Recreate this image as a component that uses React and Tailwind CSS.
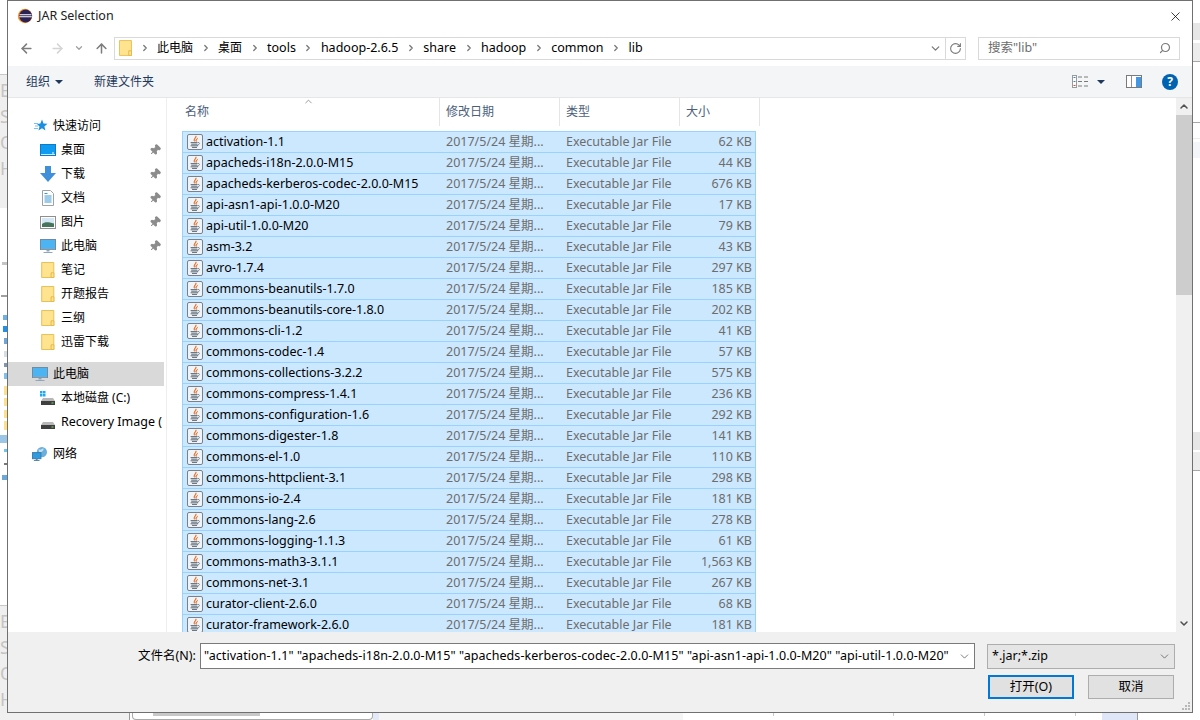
import React from 'react';
import { ArrowLeft, ArrowRight, ArrowUp, ChevronDown, ChevronRight, ChevronUp, RotateCw, Search, X, Pin } from 'lucide-react';

const files = [
  ['activation-1.1', '62 KB'],
  ['apacheds-i18n-2.0.0-M15', '44 KB'],
  ['apacheds-kerberos-codec-2.0.0-M15', '676 KB'],
  ['api-asn1-api-1.0.0-M20', '17 KB'],
  ['api-util-1.0.0-M20', '79 KB'],
  ['asm-3.2', '43 KB'],
  ['avro-1.7.4', '297 KB'],
  ['commons-beanutils-1.7.0', '185 KB'],
  ['commons-beanutils-core-1.8.0', '202 KB'],
  ['commons-cli-1.2', '41 KB'],
  ['commons-codec-1.4', '57 KB'],
  ['commons-collections-3.2.2', '575 KB'],
  ['commons-compress-1.4.1', '236 KB'],
  ['commons-configuration-1.6', '292 KB'],
  ['commons-digester-1.8', '141 KB'],
  ['commons-el-1.0', '110 KB'],
  ['commons-httpclient-3.1', '298 KB'],
  ['commons-io-2.4', '181 KB'],
  ['commons-lang-2.6', '278 KB'],
  ['commons-logging-1.1.3', '61 KB'],
  ['commons-math3-3.1.1', '1,563 KB'],
  ['commons-net-3.1', '267 KB'],
  ['curator-client-2.6.0', '68 KB'],
  ['curator-framework-2.6.0', '181 KB'],
];

const crumbs = ['此电脑', '桌面', 'tools', 'hadoop-2.6.5', 'share', 'hadoop', 'common', 'lib'];

// bits of the window behind the dialog that show in the left edge
const leftMarks = [
  [262, 'w-[5px]', 'bg-[#c4c4c4]', 3], [295, 'w-[6px]', 'bg-[#a0a0a0]', 2], [315, 'w-[4px]', 'bg-[#6cb2ea]', 5],
  [326, 'w-[4px]', 'bg-[#1e90f0]', 6], [338, 'w-[3px]', 'bg-[#6da6de]', 6], [351, 'w-[3px]', 'bg-[#d5dde5]', 6],
  [363, 'w-[3px]', 'bg-[#7c97ae]', 4], [373, 'w-[3px]', 'bg-[#7fc0ee]', 6], [386, 'w-[3px]', 'bg-[#ffe08a]', 9],
  [398, 'w-[3px]', 'bg-[#ffe08a]', 8], [410, 'w-[3px]', 'bg-[#ffe08a]', 8], [421, 'w-[3px]', 'bg-[#ffe08a]', 9],
  [435, 'w-[7px]', 'bg-[#9cc6e8]', 8], [449, 'w-[3px]', 'bg-[#6cc6ee]', 3], [463, 'w-[3px]', 'bg-[#777777]', 2],
  [475, 'w-[5px]', 'bg-[#6aa9dc]', 5],
];

function EclipseIcon() {
  return (
    <svg width="16" height="16" viewBox="0 0 16 16">
      <circle cx="8" cy="8" r="7.2" fill="#f7941e" />
      <circle cx="8.6" cy="8" r="6.5" fill="#2c2255" />
      <path d="M2.5 6.3h12v1h-12zM2.2 8.3h12.6v1H2.2z" fill="#fff" />
    </svg>
  );
}

function Folder({ size = 16 }) {
  return (
    <svg width={size * 0.85} height={size} viewBox="0 0 14 17">
      <path d="M.5.5h12.9v16H.5z" fill="#ffe38f" stroke="#e8bd4f" />
      <path d="M10.5 11.5h3v5h-3z" fill="#ffe38f" stroke="#e3b749" />
    </svg>
  );
}

function JarIcon() {
  return (
    <svg width="16" height="16" viewBox="0 0 16 16" className="shrink-0">
      <rect x=".5" y=".5" width="15" height="15" rx="1.5" fill="#f1f4f7" stroke="#76838f" />
      <path d="M9 1.8c1.2 2-2.6 3-1.2 5.7C5.4 5.8 8.6 4 9 1.8zM10.6 4.2c-.1 1.2-1.9 1.6-1.2 3.3-1.5-1.2.2-2.6 1.2-3.3z" fill="#e0651b" stroke="#e0651b" strokeWidth=".5" />
      <path d="M3.6 8.6h6.8M4.2 10.2h6M3.6 11.8h7.4M5 13.4h5" stroke="#5d6a76" strokeWidth="1" fill="none" />
      <path d="M10.6 8.4c2.6-.3 2.4 2.4-.5 2.8" stroke="#5d6a76" strokeWidth=".8" fill="none" />
    </svg>
  );
}

function Monitor({ size = 16 }) {
  return (
    <svg width={size} height={size} viewBox="0 0 16 16">
      <rect x=".5" y="1.5" width="15" height="10" fill="#4cb4f2" stroke="#6d8ba3" />
      <path d="M1 10.5h14v1H1z" fill="#8fa6b8" />
      <path d="M6.5 12h3v1.5h-3z" fill="#8fa6b8" />
      <path d="M3.5 14h9v1h-9z" fill="#8fa6b8" />
    </svg>
  );
}

function Desktop() {
  return (
    <svg width="16" height="14" viewBox="0 0 16 14">
      <rect x=".5" y="1.5" width="15" height="11" fill="#0f9bf0" stroke="#0a7ccb" />
      <path d="M1 11h14v1H1z" fill="#cfeaff" />
      <path d="M12 9.5h2v1h-2z" fill="#fff" />
    </svg>
  );
}

function Download() {
  return (
    <svg width="16" height="16" viewBox="0 0 16 16">
      <path d="M5 0h6v7h5l-8 9-8-9h5z" fill="#3f8fdb" />
    </svg>
  );
}

function Doc() {
  return (
    <svg width="16" height="16" viewBox="0 0 16 16">
      <path d="M2.5.5h8l3 3v12h-11z" fill="#fff" stroke="#9aa3ab" />
      <path d="M4.5 3.5h3M4.5 6h7M4.5 8h7M4.5 10h7M4.5 12h7" stroke="#3b97d3" />
    </svg>
  );
}

function Picture() {
  return (
    <svg width="16" height="13" viewBox="0 0 16 13">
      <rect x=".5" y=".5" width="15" height="12" fill="#fff" stroke="#8f8f8f" />
      <rect x="2" y="2" width="12" height="9" fill="#d5e7f5" />
      <path d="M2 8c3-2.5 6-2 12-.5V11H2z" fill="#47745b" />
    </svg>
  );
}

function Drive({ win }) {
  return (
    <svg width="16" height="16" viewBox="0 0 16 16">
      {win && <path d="M0 1h2.5v2.5H0zM3 1h2.5v2.5H3zM0 4h2.5v2.5H0zM3 4h2.5v2.5H3z" fill="#1eaaf1" />}
      <path d="M3 8h10l2 3H1z" fill="#b8b8b8" />
      <rect x="1" y="11" width="14" height="4" fill="#3f3f3f" />
      <path d="M11.5 12.5h2v1h-2z" fill="#6fe06f" />
    </svg>
  );
}

function Network() {
  return (
    <svg width="17" height="16" viewBox="0 0 17 16">
      <circle cx="10.5" cy="6" r="5.5" fill="#6aaedc" />
      <path d="M7 3c2 1 3 0 5-1 1 2-1 3-2 4-2 1-3 0-3-3z" fill="#c3e1f4" />
      <rect x=".5" y="6.5" width="9" height="6.5" fill="#2f9be0" stroke="#3a7cab" />
      <path d="M4 13h2v1.5H4zM2 14.5h6v1H2z" fill="#5a89ab" />
    </svg>
  );
}

function QuickStar() {
  return (
    <svg width="15" height="14" viewBox="0 0 15 14">
      <path d="M9 .5l1.5 4 4 .3-3.1 2.6 1 4.1L9 9.3l-3.5 2.2 1-4.1L4 5l3.4-.4z" fill="#1d8fe1" />
      <path d="M1 4.5h4M2 7h3M1 9.5h4" stroke="#7cc0ee" />
    </svg>
  );
}

function NavItem({ icon, label, pinned, sub = true, selected, textClass = 'text-[12px]', className = '' }) {
  return (
    <div className={`flex items-center h-[24px] shrink-0 whitespace-nowrap overflow-hidden ${selected ? 'bg-[#d9d9d9]' : ''} ${className}`}>
      <div className={`flex justify-center shrink-0 ${sub ? 'w-[16px] ml-[32px] mr-[5px]' : 'w-[16px] ml-[24px] mr-[5px]'}`}>{icon}</div>
      <span className={`flex-1 text-black ${textClass}`}>{label}</span>
      {pinned && <Pin size={12} className="mr-[3px] shrink-0 rotate-45 text-[#8c8c8c] fill-[#8c8c8c]" />}
    </div>
  );
}

function FileRow({ name, size }) {
  return (
    <div className="flex items-center h-[21px] w-[574px] shrink-0 bg-[#cce8ff] border border-b-0 border-[#99d1ff] whitespace-nowrap text-[12.5px]">
      <div className="flex items-center w-[256px] pl-[4px] gap-[3px]">
        <JarIcon />
        <span className="text-black">{name}</span>
      </div>
      <span className="w-[120px] pl-[7px] text-[#6d6d6d]">2017/5/24 星期...</span>
      <span className="w-[120px] pl-[7px] text-[#6d6d6d]">Executable Jar File</span>
      <span className="flex-1 pr-[3px] text-right text-[#6d6d6d]">{size}</span>
    </div>
  );
}

function HeaderCell({ label, className = '' }) {
  return <div className={`flex items-center h-[28px] border-r border-[#e5e5e5] text-[12px] text-[#4c607a] ${className}`}>{label}</div>;
}

function LeftStrip() {
  return (
    <div className="relative w-[7px] h-[713px] shrink-0 overflow-hidden bg-white text-[18px] leading-none text-[#c4c4c4]">
      <div className="h-[74px]" />
      <div className="h-[134px] bg-[#efefef] border-t border-[#c8c8c8] flex flex-col gap-[8px] pt-[6px]">
        <span>E</span><span>S</span><span>O</span><span>H</span>
      </div>
      {leftMarks.map(([top, w, bg, h]) => (
        <div key={top} className={`absolute right-0 ${w} ${bg}`} style={{ top, height: h }} />
      ))}
      <div className="absolute left-0 top-[605px] w-[7px] h-[108px] bg-[#efefef] border-t border-[#c8c8c8] flex flex-col gap-[8px] pt-[6px]">
        <span>E</span><span>S</span><span>O</span><span>H</span>
      </div>
    </div>
  );
}

function RightStrip() {
  return (
    <div className="w-[7px] h-[713px] shrink-0 flex flex-col bg-white">
      <div className="h-[23px]" />
      <div className="h-[17px] bg-[#e6e6e6]" />
      <div className="h-[3px]" />
      <div className="h-[19px] bg-[#ececec] border-b border-[#a8a8a8]" />
      <div className="h-[61px] border-b border-[#a8a8a8]" />
      <div className="h-[16px] border-b border-[#ededed]" />
      <div className="h-[3px]" />
      <div className="h-[16px] bg-[#f3f5f9]" />
      <div className="h-[274px]" />
      <div className="h-[18px] bg-[#e6e6e6]" />
      <div className="h-[2px]" />
      <div className="h-[19px] bg-[#ececec] border-b border-[#a8a8a8]" />
    </div>
  );
}

function BottomStrip() {
  return (
    <div className="flex h-[7px] w-[1200px] bg-white overflow-hidden">
      <div className="w-[130px] bg-[#f0f0f0] border-r border-[#9a9a9a]" />
      <div className="w-[241px] ml-[2px] border border-t-0 border-[#aaaaaa] rounded-b-[4px] bg-white">
        <div className="ml-[20px] w-[107px] h-[3px] bg-[#c8c8c8]" />
      </div>
      <div className="w-[6px] bg-[#e4e9f8]" />
      <div className="w-[304px] bg-[#f5f5f5]" />
      <div className="flex w-[419px] h-[3px]">
        <div className="w-[91px] h-[3px] border-r border-[#c8c8c8]" />
        <div className="w-[120px] h-[3px] border-r border-[#c8c8c8]" />
        <div className="w-[91px] h-[3px] border-r border-[#c8c8c8]" />
        <div className="w-[91px] h-[3px] border-r border-[#c8c8c8]" />
      </div>
      <div className="w-[36px] bg-[#dfe6f7] border-r border-[#9a9a9a]" />
    </div>
  );
}

function ViewIcon() {
  return (
    <svg width="16" height="13" viewBox="0 0 16 13">
      <rect x=".5" y=".5" width="4" height="12" fill="#fff" stroke="#9a9a9a" />
      <path d="M1.5 2h2v1h-2z" fill="#3b7fd0" />
      <path d="M1.5 6h2v1h-2z" fill="#3b7fd0" />
      <path d="M1.5 10h2v1h-2z" fill="#d84a3a" />
      <path d="M6 2h4M12 2h4M6 6.5h4M12 6.5h4M6 11h4M12 11h4" stroke="#7a7a7a" />
    </svg>
  );
}

function PaneIcon() {
  return (
    <svg width="16" height="13" viewBox="0 0 16 13">
      <rect x=".5" y=".5" width="15" height="12" fill="#fff" stroke="#7a7a7a" />
      <path d="M5.5 1v11" stroke="#8f8f8f" />
      <rect x="10" y="2" width="5" height="10" fill="#3f97e6" />
    </svg>
  );
}

export default function App() {
  return (
    <div className="w-[1200px] h-[720px] overflow-hidden bg-white text-black" style={{ fontFamily: '"Noto Sans", "Noto Sans CJK SC", sans-serif' }}>
      <div className="flex h-[713px]">
        <LeftStrip />
        <div className="flex flex-col w-[1186px] h-[713px] shrink-0 bg-white border border-[#707070]">
          {/* title bar */}
          <div className="flex items-center h-[29px] shrink-0 pl-[9px] pr-[9px] pt-[1px]">
            <EclipseIcon />
            <span className="ml-[5px] text-[12.5px] text-[#222]">JAR Selection</span>
            <X size={15} strokeWidth={1.2} className="ml-auto text-black" />
          </div>

          {/* nav bar */}
          <div className="flex items-center h-[36px] shrink-0">
            <ArrowLeft size={15} strokeWidth={2.4} className="ml-[11px] text-[#7d7d7d]" />
            <ArrowRight size={15} strokeWidth={2.4} className="ml-[16px] text-[#d4d4d4]" />
            <ChevronDown size={10} strokeWidth={3} className="ml-[9px] text-[#a0a0a0]" />
            <ArrowUp size={15} strokeWidth={2.4} className="ml-[10px] text-[#7d7d7d]" />
            <div className="flex items-center w-[852px] h-[23px] ml-[5px] border border-[#d9d9d9]">
              <div className="flex ml-[4px] w-[13px] shrink-0"><Folder size={16} /></div>
              <div className="flex items-center text-[12.5px] text-black whitespace-nowrap">
                {crumbs.map((c, i) => (
                  <React.Fragment key={i}>
                    <ChevronRight size={10} strokeWidth={3} className="mx-[7.5px] text-[#777] shrink-0" />
                    <span className={i < 2 ? 'text-[12px]' : ''}>{c}</span>
                  </React.Fragment>
                ))}
              </div>
              <ChevronDown size={13} strokeWidth={2.4} className="ml-auto mr-[3px] text-[#7a7a7a]" />
              <div className="flex items-center justify-center w-[20px] h-full border-l border-[#d9d9d9]">
                <RotateCw size={13} strokeWidth={2} className="text-[#7a7a7a]" />
              </div>
            </div>
            <div className="flex items-center justify-between w-[202px] h-[23px] ml-[12px] pl-[9px] pr-[8px] border border-[#d9d9d9] text-[12.5px] text-[#6d6d6d]">
              <span>搜索"lib"</span>
              <Search size={12} strokeWidth={2.4} className="text-[#7a7a7a] -scale-x-100" />
            </div>
          </div>

          {/* toolbar */}
          <div className="flex items-center h-[32px] shrink-0 bg-[#f4f5f7] border-b border-[#e6e6e6] text-[12px] text-[#1e395b]">
            <span className="ml-[18px]">组织</span>
            <span className="ml-[5px] w-0 h-0 border-x-[4px] border-x-transparent border-t-[4px] border-t-[#1e395b]" />
            <span className="ml-[31px]">新建文件夹</span>
            <div className="ml-auto mr-[14px] flex items-center">
              <ViewIcon />
              <span className="ml-[9px] w-0 h-0 border-x-[4px] border-x-transparent border-t-[4px] border-t-[#1e395b]" />
              <span className="ml-[21px] flex"><PaneIcon /></span>
              <span className="ml-[20px] flex items-center justify-center w-[16px] h-[16px] rounded-full bg-[#0063b1] text-white text-[12px] font-bold leading-none">?</span>
            </div>
          </div>

          {/* main area */}
          <div className="flex h-[534px] shrink-0 overflow-hidden">
            <div className="flex flex-col w-[159px] shrink-0 border-r border-[#eeeeee] pt-[16px]">
              <div className="w-[156px] flex flex-col">
                <NavItem sub={false} icon={<QuickStar />} label="快速访问" />
                <NavItem icon={<Desktop />} label="桌面" pinned />
                <NavItem icon={<Download />} label="下载" pinned />
                <NavItem icon={<Doc />} label="文档" pinned />
                <NavItem icon={<Picture />} label="图片" pinned />
                <NavItem icon={<Monitor />} label="此电脑" pinned />
                <NavItem icon={<Folder size={16} />} label="笔记" />
                <NavItem icon={<Folder size={16} />} label="开题报告" />
                <NavItem icon={<Folder size={16} />} label="三纲" />
                <NavItem icon={<Folder size={16} />} label="迅雷下载" />
                <NavItem sub={false} selected icon={<Monitor />} label="此电脑" className="mt-[8px]" />
                <NavItem icon={<Drive win />} label="本地磁盘 (C:)" />
                <NavItem icon={<Drive />} label="Recovery Image (" textClass="text-[12.5px]" />
                <NavItem sub={false} icon={<Network />} label="网络" className="mt-[8px]" />
              </div>
            </div>

            <div className="flex-1 min-w-0 flex flex-col pl-[15px] overflow-hidden">
              <div className="relative flex h-[28px] shrink-0">
                <ChevronUp size={11} strokeWidth={1.6} className="absolute left-[121px] -top-[2px] text-[#777]" />
                <HeaderCell label="名称" className="w-[258px] pl-[3px]" />
                <HeaderCell label="修改日期" className="w-[120px] pl-[6px]" />
                <HeaderCell label="类型" className="w-[120px] pl-[6px]" />
                <HeaderCell label="大小" className="w-[80px] pl-[6px]" />
              </div>
              <div className="flex flex-col mt-[5px]">
                {files.map((f) => <FileRow key={f[0]} name={f[0]} size={f[1]} />)}
              </div>
            </div>

            <div className="flex flex-col items-center justify-between w-[16px] shrink-0 bg-[#f0f0f0]">
              <div className="flex flex-col items-center w-full">
                <ChevronUp size={12} strokeWidth={3} className="my-[2px] h-[13px] text-[#505050]" />
                <div className="w-full h-[180px] bg-[#cdcdcd]" />
              </div>
              <ChevronDown size={12} strokeWidth={3} className="my-[2px] h-[13px] text-[#505050]" />
            </div>
          </div>

          {/* footer */}
          <div className="relative flex flex-col flex-1 bg-[#f0f0f0] pt-[11px] text-[12.5px]">
            <div className="flex items-center">
              <span className="ml-[130px] w-[62px] whitespace-nowrap text-black">文件名(N):</span>
              <div className="flex items-center w-[775px] h-[26px] bg-white border border-[#7a7a7a] pl-[3px] whitespace-nowrap overflow-hidden">
                <span className="flex-1 overflow-hidden tracking-[0.07px]">"activation-1.1" "apacheds-i18n-2.0.0-M15" "apacheds-kerberos-codec-2.0.0-M15" "api-asn1-api-1.0.0-M20" "api-util-1.0.0-M20"</span>
                <ChevronDown size={13} strokeWidth={1.4} className="mx-[3px] shrink-0 text-[#555]" />
              </div>
              <div className="flex items-center justify-between w-[188px] h-[25px] ml-[12px] pl-[4px] pr-[3px] bg-[#e5e5e5] border border-[#adadad]">
                <span>*.jar;*.zip</span>
                <ChevronDown size={13} strokeWidth={1.4} className="text-[#555]" />
              </div>
            </div>
            <div className="flex mt-[6px] ml-[980px] gap-[14px]">
              <button className="w-[86px] h-[24px] bg-[#e1e1e1] border-2 border-[#0078d7] text-[12.5px]">打开(O)</button>
              <button className="w-[86px] h-[24px] bg-[#e1e1e1] border border-[#adadad] text-[12.5px]">取消</button>
            </div>
            <svg width="10" height="10" viewBox="0 0 10 10" className="absolute right-[1px] bottom-[1px]">
              <path d="M7 1h2v2H7zM4 4h2v2H4zM7 4h2v2H7zM1 7h2v2H1zM4 7h2v2H4zM7 7h2v2H7z" fill="#b8b8b8" />
            </svg>
          </div>
        </div>
        <RightStrip />
      </div>
      <BottomStrip />
    </div>
  );
}
